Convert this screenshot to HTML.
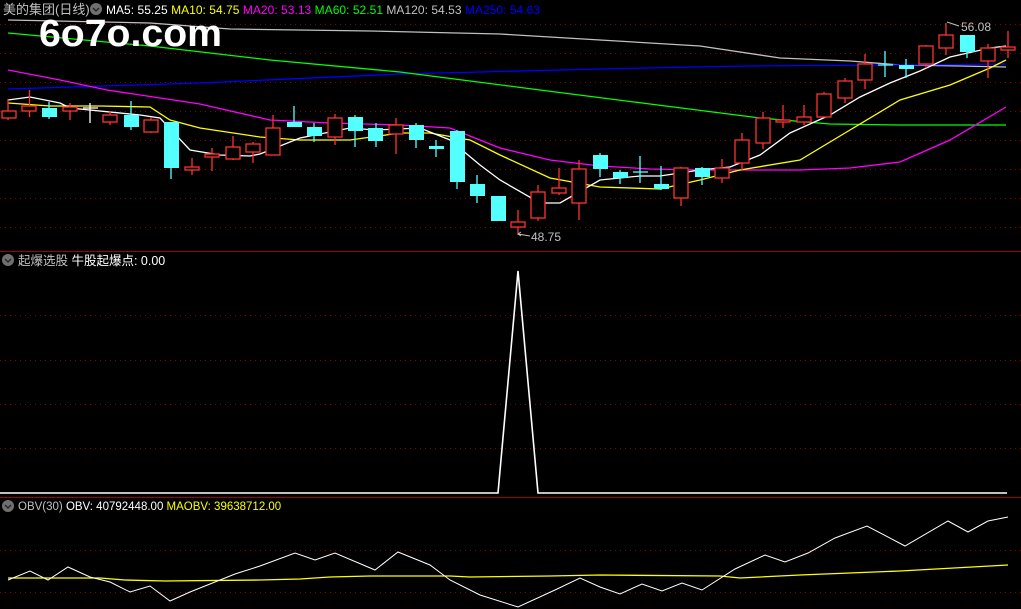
<!DOCTYPE html>
<html><head><meta charset="utf-8"><style>
html,body{margin:0;padding:0;background:#000;width:1021px;height:609px;overflow:hidden}
svg{display:block}
text{font-family:"Liberation Sans","Noto Sans CJK SC",sans-serif}
</style></head><body>
<svg width="1021" height="609" viewBox="0 0 1021 609" xmlns="http://www.w3.org/2000/svg">
<rect width="1021" height="609" fill="#000"/>
<g stroke="#8b0000" stroke-dasharray="1,4" stroke-width="1">
<line x1="0" y1="24.5" x2="1021" y2="24.5"/><line x1="0" y1="53.5" x2="1021" y2="53.5"/><line x1="0" y1="82.5" x2="1021" y2="82.5"/><line x1="0" y1="111.5" x2="1021" y2="111.5"/><line x1="0" y1="140.5" x2="1021" y2="140.5"/><line x1="0" y1="169.5" x2="1021" y2="169.5"/><line x1="0" y1="198.5" x2="1021" y2="198.5"/><line x1="0" y1="227.5" x2="1021" y2="227.5"/>
<line x1="0" y1="315.5" x2="1021" y2="315.5"/><line x1="0" y1="360.5" x2="1021" y2="360.5"/><line x1="0" y1="404.5" x2="1021" y2="404.5"/><line x1="0" y1="448.5" x2="1021" y2="448.5"/>
<line x1="0" y1="550.5" x2="1021" y2="550.5"/><line x1="0" y1="592.5" x2="1021" y2="592.5"/>
</g>
<line x1="0" y1="251.5" x2="1021" y2="251.5" stroke="#a00000"/>
<line x1="0" y1="497.5" x2="1021" y2="497.5" stroke="#a00000"/>

<polyline fill="none" stroke="#c0c0c0" stroke-width="1.3" points="8,20 150,23 230,29 370,31 500,34 600,40 700,46 780,58 850,61 900,65 960,66 1006,67"/>
<polyline fill="none" stroke="#0000ff" stroke-width="1.3" points="8,89 200,83 400,74 600,69 745,66 900,65 1006,64"/>
<polyline fill="none" stroke="#00ff00" stroke-width="1.3" points="8,33 150,46 270,60 400,72 540,90 650,104 760,118 830,124 900,125 1006,125"/>
<polyline fill="none" stroke="#ff00ff" stroke-width="1.3" points="8,70 60,80 107,90 200,104 270,120 330,123 400,125 450,128 500,148 550,160 600,166 650,169 700,170 800,170 850,168 900,162 950,140 1006,107"/>
<polyline fill="none" stroke="#ffff00" stroke-width="1.3" points="8,103 50,106 100,106 150,107 170,120 200,128 260,137 300,140 350,140 400,133 430,133 470,140 500,155 550,178 600,187 660,189 700,180 740,170 800,160 850,130 900,100 950,85 990,68 1006,60"/>
<polyline fill="none" stroke="#ffffff" stroke-width="1.3" points="8,100 30,97 60,103 70,108 140,115 160,118 190,150 220,155 250,156 260,154 300,138 350,128 375,130 420,128 450,140 480,165 500,180 540,203 560,203 600,180 640,176 660,176 700,170 730,167 760,155 790,133 830,115 860,97 890,83 920,71 950,57 990,48 1006,46"/>

<g stroke="#ff3232" stroke-width="1.3">
<line x1="8" y1="99" x2="8" y2="120"/><line x1="29.5" y1="90" x2="29.5" y2="117"/><line x1="70" y1="103" x2="70" y2="120"/><line x1="110" y1="111" x2="110" y2="125"/><line x1="151" y1="117" x2="151" y2="133"/><line x1="192" y1="158" x2="192" y2="175"/><line x1="212" y1="148" x2="212" y2="171"/><line x1="233" y1="136" x2="233" y2="160"/><line x1="253" y1="142" x2="253" y2="163"/><line x1="273" y1="115" x2="273" y2="155"/><line x1="335" y1="114" x2="335" y2="145"/><line x1="396" y1="118" x2="396" y2="154"/><line x1="518" y1="210" x2="518" y2="235"/><line x1="538" y1="185" x2="538" y2="221"/><line x1="559" y1="168" x2="559" y2="195"/><line x1="579" y1="160" x2="579" y2="220"/><line x1="681" y1="167" x2="681" y2="206"/><line x1="722" y1="159" x2="722" y2="183"/><line x1="742" y1="133" x2="742" y2="170"/><line x1="763" y1="112" x2="763" y2="149"/><line x1="783" y1="105" x2="783" y2="128"/><line x1="804" y1="105" x2="804" y2="125"/><line x1="824" y1="92" x2="824" y2="117"/><line x1="845" y1="78" x2="845" y2="103"/><line x1="865" y1="54" x2="865" y2="89"/><line x1="926" y1="45" x2="926" y2="68"/><line x1="946" y1="23" x2="946" y2="55"/><line x1="988" y1="44" x2="988" y2="78"/><line x1="1008" y1="31" x2="1008" y2="58"/>
</g>
<g stroke="#ff3232" stroke-width="1.3" fill="#000">
<rect x="2" y="111" width="14" height="7"/><rect x="22" y="106" width="14" height="5"/><rect x="63" y="107" width="14" height="4"/><rect x="103" y="115" width="14" height="7"/><rect x="144" y="120" width="14" height="12"/><rect x="185" y="167" width="14" height="3"/><rect x="205" y="154" width="14" height="3"/><rect x="226" y="147" width="14" height="12"/><rect x="246" y="144" width="14" height="8"/><rect x="266" y="128" width="14" height="27"/><rect x="328" y="118" width="14" height="19"/><rect x="389" y="125" width="14" height="9"/><rect x="511" y="222" width="14" height="5"/><rect x="531" y="192" width="14" height="26"/><rect x="552" y="188" width="14" height="5"/><rect x="572" y="169" width="14" height="34"/><rect x="674" y="168" width="14" height="30"/><rect x="715" y="168" width="14" height="10"/><rect x="735" y="140" width="14" height="23"/><rect x="756" y="118" width="14" height="25"/><rect x="776" y="120" width="14" height="2"/><rect x="797" y="117" width="14" height="5"/><rect x="817" y="94" width="14" height="23"/><rect x="838" y="81" width="14" height="17"/><rect x="858" y="64" width="14" height="16"/><rect x="919" y="46" width="14" height="18"/><rect x="939" y="35" width="14" height="13"/><rect x="981" y="48" width="14" height="13"/><rect x="1001" y="47" width="14" height="3"/>
</g>
<g stroke="#54ffff" stroke-width="1.3">
<line x1="49" y1="102" x2="49" y2="119"/><line x1="131" y1="101" x2="131" y2="130"/><line x1="171" y1="122" x2="171" y2="179"/><line x1="294" y1="106" x2="294" y2="127"/><line x1="314" y1="123" x2="314" y2="142"/><line x1="355" y1="115" x2="355" y2="147"/><line x1="376" y1="123" x2="376" y2="147"/><line x1="416" y1="123" x2="416" y2="148"/><line x1="436" y1="140" x2="436" y2="157"/><line x1="457" y1="130" x2="457" y2="189"/><line x1="477" y1="175" x2="477" y2="203"/><line x1="498" y1="196" x2="498" y2="221"/><line x1="600" y1="153" x2="600" y2="177"/><line x1="620" y1="170" x2="620" y2="184"/><line x1="640" y1="156" x2="640" y2="183"/><line x1="633" y1="172" x2="648" y2="172"/><line x1="661" y1="166" x2="661" y2="190"/><line x1="702" y1="167" x2="702" y2="185"/><line x1="885" y1="51" x2="885" y2="77"/><line x1="878" y1="65" x2="893" y2="65"/><line x1="906" y1="59" x2="906" y2="78"/><line x1="967" y1="52" x2="967" y2="58"/>
</g>
<g fill="#54ffff">
<rect x="42" y="108" width="15" height="9"/><rect x="124" y="115" width="15" height="12"/><rect x="164" y="122" width="15" height="46"/><rect x="287" y="122" width="15" height="5"/><rect x="307" y="127" width="15" height="9"/><rect x="348" y="117" width="15" height="14"/><rect x="368" y="128" width="15" height="13"/><rect x="409" y="125" width="15" height="15"/><rect x="429" y="146" width="15" height="3"/><rect x="450" y="131" width="15" height="51"/><rect x="470" y="184" width="15" height="12"/><rect x="491" y="196" width="15" height="25"/><rect x="593" y="155" width="15" height="14"/><rect x="613" y="172" width="15" height="6"/><rect x="654" y="184" width="15" height="5"/><rect x="695" y="168" width="15" height="9"/><rect x="899" y="65" width="15" height="4"/><rect x="960" y="35" width="15" height="17"/>
</g>
<g stroke="#fff" stroke-width="1.3"><line x1="90" y1="103" x2="90" y2="123"/><line x1="83" y1="108" x2="98" y2="108"/></g>

<text x="531" y="241" fill="#c0c0c0" font-size="12">48.75</text>
<path d="M518,234 L530,236 M518,234 l3,-2 M518,234 l3,2" stroke="#c0c0c0" fill="none"/>
<text x="961" y="31" fill="#c0c0c0" font-size="12">56.08</text>
<path d="M947,22 L959,26" stroke="#c0c0c0" fill="none"/>

<polyline fill="none" stroke="#fff" stroke-width="1.6" points="0,493 498,493 518,271 538,493 1007,493"/>

<polyline fill="none" stroke="#ffff00" stroke-width="1.3" points="8,578 100,578 125,580 165,581 260,580 300,579 330,577 370,576 450,576 470,577 550,576 600,575 720,576 740,578 800,575 900,571 1008,565"/>
<polyline fill="none" stroke="#fff" stroke-width="1" points="8,580 30,571 48,580 68,567 90,577 110,582 130,592 150,586 170,601 190,592 215,582 235,574 260,566 295,553 315,560 335,553 375,570 398,552 430,565 450,580 480,595 518,607 555,590 580,578 600,587 620,594 642,584 662,591 682,583 702,590 735,569 765,555 785,562 808,553 835,538 867,526 905,546 948,521 968,532 988,521 1008,517"/>

<text x="3" y="14" fill="#c0c0c0" font-size="13">美的集团(日线)</text>
<circle cx="96" cy="9" r="6" fill="#707070"/><path d="M93,8 l3,3 l3,-3" stroke="#222" fill="none" stroke-width="1.3"/>
<text x="106" y="14" font-size="12" textLength="434" lengthAdjust="spacing"><tspan fill="#fff">MA5: 55.25 </tspan><tspan fill="#ffff00">MA10: 54.75 </tspan><tspan fill="#ff00ff">MA20: 53.13 </tspan><tspan fill="#00ff00">MA60: 52.51 </tspan><tspan fill="#c0c0c0">MA120: 54.53 </tspan><tspan fill="#0000ff">MA250: 54.63</tspan></text>
<text x="39" y="46" fill="#fff" font-size="38" font-weight="bold" textLength="183" lengthAdjust="spacingAndGlyphs">6o7o.com</text>

<circle cx="8" cy="260" r="6" fill="#707070"/><path d="M5,259 l3,3 l3,-3" stroke="#222" fill="none" stroke-width="1.3"/>
<text x="18" y="265" font-size="12.5"><tspan fill="#c0c0c0">起爆选股 </tspan><tspan fill="#fff">牛股起爆点: 0.00</tspan></text>

<circle cx="8" cy="506" r="6" fill="#707070"/><path d="M5,505 l3,3 l3,-3" stroke="#222" fill="none" stroke-width="1.3"/>
<text x="18" y="510" font-size="11.5"><tspan fill="#c0c0c0">OBV(30) </tspan><tspan fill="#fff">OBV: 40792448.00 </tspan><tspan fill="#ffff00">MAOBV: 39638712.00</tspan></text>
</svg>
</body></html>
